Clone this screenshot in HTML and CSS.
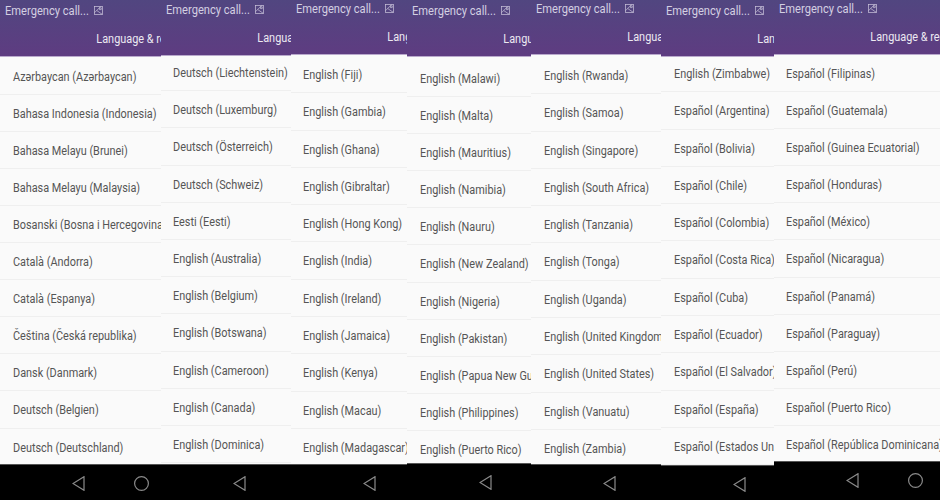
FILE: index.html
```html
<!DOCTYPE html>
<html lang="en">
<head>
    <meta charset="UTF-8">
    <title>Language &amp; region</title>
    <link rel="stylesheet" href="styles.css">
</head>
<body>
    <div class="strip">
        <section class="phone p1">
            <header class="top">
                <div class="status"><span>Emergency call...</span>
                    <svg class="pic" viewBox="0 0 10 10"><rect x=".5" y=".5" width="9" height="9"/><path d="M.5 7.5 L7.5 .5 M3 5 L9.5 9.5 M6 2 h2 v2 h-2z"/></svg>
                </div>
                <div class="title">Language &amp; region</div>
            </header>
            <div class="list"><ul>
                <li>Azərbaycan (Azərbaycan)</li>
                <li>Bahasa Indonesia (Indonesia)</li>
                <li>Bahasa Melayu (Brunei)</li>
                <li>Bahasa Melayu (Malaysia)</li>
                <li>Bosanski (Bosna i Hercegovina)</li>
                <li>Català (Andorra)</li>
                <li>Català (Espanya)</li>
                <li>Čeština (Česká republika)</li>
                <li>Dansk (Danmark)</li>
                <li>Deutsch (Belgien)</li>
                <li>Deutsch (Deutschland)</li>
            </ul></div>
            <nav class="keys">
                <svg class="back" viewBox="0 0 13 15"><path d="M12 .7 V14.3 L1 7.5z"/></svg>
                <svg class="home" viewBox="0 0 15 15"><circle cx="7.5" cy="7.5" r="6.9"/></svg>
            </nav>
        </section>

        <section class="phone p2">
            <header class="top">
                <div class="status"><span>Emergency call...</span>
                    <svg class="pic" viewBox="0 0 10 10"><rect x=".5" y=".5" width="9" height="9"/><path d="M.5 7.5 L7.5 .5 M3 5 L9.5 9.5 M6 2 h2 v2 h-2z"/></svg>
                </div>
                <div class="title">Language &amp; region</div>
            </header>
            <div class="list"><ul>
                <li>Deutsch (Liechtenstein)</li>
                <li>Deutsch (Luxemburg)</li>
                <li>Deutsch (Österreich)</li>
                <li>Deutsch (Schweiz)</li>
                <li>Eesti (Eesti)</li>
                <li>English (Australia)</li>
                <li>English (Belgium)</li>
                <li>English (Botswana)</li>
                <li>English (Cameroon)</li>
                <li>English (Canada)</li>
                <li>English (Dominica)</li>
            </ul></div>
            <nav class="keys">
                <svg class="back" viewBox="0 0 13 15"><path d="M12 .7 V14.3 L1 7.5z"/></svg>
                <svg class="home" viewBox="0 0 15 15"><circle cx="7.5" cy="7.5" r="6.9"/></svg>
            </nav>
        </section>

        <section class="phone p3">
            <header class="top">
                <div class="status"><span>Emergency call...</span>
                    <svg class="pic" viewBox="0 0 10 10"><rect x=".5" y=".5" width="9" height="9"/><path d="M.5 7.5 L7.5 .5 M3 5 L9.5 9.5 M6 2 h2 v2 h-2z"/></svg>
                </div>
                <div class="title">Language &amp; region</div>
            </header>
            <div class="list"><ul>
                <li>English (Fiji)</li>
                <li>English (Gambia)</li>
                <li>English (Ghana)</li>
                <li>English (Gibraltar)</li>
                <li>English (Hong Kong)</li>
                <li>English (India)</li>
                <li>English (Ireland)</li>
                <li>English (Jamaica)</li>
                <li>English (Kenya)</li>
                <li>English (Macau)</li>
                <li>English (Madagascar)</li>
            </ul></div>
            <nav class="keys">
                <svg class="back" viewBox="0 0 13 15"><path d="M12 .7 V14.3 L1 7.5z"/></svg>
                <svg class="home" viewBox="0 0 15 15"><circle cx="7.5" cy="7.5" r="6.9"/></svg>
            </nav>
        </section>

        <section class="phone p4">
            <header class="top">
                <div class="status"><span>Emergency call...</span>
                    <svg class="pic" viewBox="0 0 10 10"><rect x=".5" y=".5" width="9" height="9"/><path d="M.5 7.5 L7.5 .5 M3 5 L9.5 9.5 M6 2 h2 v2 h-2z"/></svg>
                </div>
                <div class="title">Language &amp; region</div>
            </header>
            <div class="list"><ul>
                <li>English (Malawi)</li>
                <li>English (Malta)</li>
                <li>English (Mauritius)</li>
                <li>English (Namibia)</li>
                <li>English (Nauru)</li>
                <li>English (New Zealand)</li>
                <li>English (Nigeria)</li>
                <li>English (Pakistan)</li>
                <li>English (Papua New Guinea)</li>
                <li>English (Philippines)</li>
                <li>English (Puerto Rico)</li>
            </ul></div>
            <nav class="keys">
                <svg class="back" viewBox="0 0 13 15"><path d="M12 .7 V14.3 L1 7.5z"/></svg>
                <svg class="home" viewBox="0 0 15 15"><circle cx="7.5" cy="7.5" r="6.9"/></svg>
            </nav>
        </section>

        <section class="phone p5">
            <header class="top">
                <div class="status"><span>Emergency call...</span>
                    <svg class="pic" viewBox="0 0 10 10"><rect x=".5" y=".5" width="9" height="9"/><path d="M.5 7.5 L7.5 .5 M3 5 L9.5 9.5 M6 2 h2 v2 h-2z"/></svg>
                </div>
                <div class="title">Language &amp; region</div>
            </header>
            <div class="list"><ul>
                <li>English (Rwanda)</li>
                <li>English (Samoa)</li>
                <li>English (Singapore)</li>
                <li>English (South Africa)</li>
                <li>English (Tanzania)</li>
                <li>English (Tonga)</li>
                <li>English (Uganda)</li>
                <li>English (United Kingdom)</li>
                <li>English (United States)</li>
                <li>English (Vanuatu)</li>
                <li>English (Zambia)</li>
            </ul></div>
            <nav class="keys">
                <svg class="back" viewBox="0 0 13 15"><path d="M12 .7 V14.3 L1 7.5z"/></svg>
                <svg class="home" viewBox="0 0 15 15"><circle cx="7.5" cy="7.5" r="6.9"/></svg>
            </nav>
        </section>

        <section class="phone p6">
            <header class="top">
                <div class="status"><span>Emergency call...</span>
                    <svg class="pic" viewBox="0 0 10 10"><rect x=".5" y=".5" width="9" height="9"/><path d="M.5 7.5 L7.5 .5 M3 5 L9.5 9.5 M6 2 h2 v2 h-2z"/></svg>
                </div>
                <div class="title">Language &amp; region</div>
            </header>
            <div class="list"><ul>
                <li>English (Zimbabwe)</li>
                <li>Español (Argentina)</li>
                <li>Español (Bolivia)</li>
                <li>Español (Chile)</li>
                <li>Español (Colombia)</li>
                <li>Español (Costa Rica)</li>
                <li>Español (Cuba)</li>
                <li>Español (Ecuador)</li>
                <li>Español (El Salvador)</li>
                <li>Español (España)</li>
                <li>Español (Estados Unidos)</li>
            </ul></div>
            <nav class="keys">
                <svg class="back" viewBox="0 0 13 15"><path d="M12 .7 V14.3 L1 7.5z"/></svg>
                <svg class="home" viewBox="0 0 15 15"><circle cx="7.5" cy="7.5" r="6.9"/></svg>
            </nav>
        </section>

        <section class="phone p7">
            <header class="top">
                <div class="status"><span>Emergency call...</span>
                    <svg class="pic" viewBox="0 0 10 10"><rect x=".5" y=".5" width="9" height="9"/><path d="M.5 7.5 L7.5 .5 M3 5 L9.5 9.5 M6 2 h2 v2 h-2z"/></svg>
                </div>
                <div class="title">Language &amp; region</div>
            </header>
            <div class="list"><ul>
                <li>Español (Filipinas)</li>
                <li>Español (Guatemala)</li>
                <li>Español (Guinea Ecuatorial)</li>
                <li>Español (Honduras)</li>
                <li>Español (México)</li>
                <li>Español (Nicaragua)</li>
                <li>Español (Panamá)</li>
                <li>Español (Paraguay)</li>
                <li>Español (Perú)</li>
                <li>Español (Puerto Rico)</li>
                <li>Español (República Dominicana)</li>
            </ul></div>
            <nav class="keys">
                <svg class="back" viewBox="0 0 13 15"><path d="M12 .7 V14.3 L1 7.5z"/></svg>
                <svg class="home" viewBox="0 0 15 15"><circle cx="7.5" cy="7.5" r="6.9"/></svg>
            </nav>
        </section>
    </div>
</body>
</html>
```
FILE: styles.css
```css
html, body {
    margin: 0;
    padding: 0;
}
body {
    width: 940px;
    height: 500px;
    overflow: hidden;
    background: #000;
    font-family: Roboto, "Liberation Sans", sans-serif;
}
.strip {
    display: flex;
    height: 500px;
}
.phone {
    --squeeze: .87;
    display: flex;
    flex-direction: column;
    flex: none;
    width: var(--w);
    height: 500px;
    overflow: hidden;
    background: #fafafa;
}
.p1 { --w: 161px; --top: 57px; --keys: 36px; --shift: .6px; --row: 37.1px; --text: 13px; }
.p2 { --w: 130px; --top: 56px; --keys: 36px; --shift: -2px; --row: 37.2px; --text: 12px; }
.p3 { --w: 116px; --top: 55px; --keys: 36px; --shift: 1px;  --row: 37.3px; --text: 12px; }
.p4 { --w: 124px; --top: 57px; --keys: 37px; --shift: 3px;  --row: 37.1px; --text: 13px; }
.p5 { --w: 130px; --top: 55px; --keys: 36px; --shift: 2px;  --row: 37.3px; --text: 13px; }
.p6 { --w: 113px; --top: 57px; --keys: 35px; --shift: -2px; --row: 37.3px; --text: 13px; }
.p7 { --w: 166px; --top: 55px; --keys: 39px; --shift: 0px;  --row: 37.1px; --text: 12px; }

/* the source shots are squashed sideways, so the text is scaled to match */
.top {
    flex: none;
    width: 360px;
    height: var(--top);
    box-sizing: border-box;
    padding: calc(var(--top) - 55px) 0 0 5px;
    background: linear-gradient(180deg, #514680, #5e3c81);
    border-bottom: 1px solid #b9a9cc;
    color: #d3d0e2;
}
.status {
    display: flex;
    align-items: center;
    height: 16px;
    font-size: 12.5px;
}
.status span {
    flex: none;
    width: 89px;
    margin-left: -.5px;
    white-space: nowrap;
    transform: scaleX(.89);
    transform-origin: left;
}
.pic {
    width: 9px;
    height: 9px;
    fill: none;
    stroke: #c9c3da;
    stroke-width: .8;
}
.title {
    width: 400px;
    padding: 12px 0 0 105px;
    font-size: 12.5px;
    line-height: 18px;
    color: #ece9f2;
    white-space: nowrap;
    transform: scaleX(var(--squeeze));
    transform-origin: left;
}
.list {
    flex: 1;
    min-height: 0;
    overflow: hidden;
}
.list ul {
    list-style: none;
    margin: var(--shift) 0 0;
    padding: 0;
    width: 500px;
    transform: scaleX(var(--squeeze));
    transform-origin: left;
}
.list li {
    box-sizing: border-box;
    height: var(--row);
    line-height: 37px;
    padding-left: calc(var(--text) / var(--squeeze));
    font-size: 12.5px;
    color: #555;
    white-space: nowrap;
    border-bottom: 1px solid #efefef;
}
.keys {
    flex: none;
    display: flex;
    align-items: flex-start;
    width: 360px;
    height: var(--keys);
    padding: 11px 0 0 72px;
    background: #000;
    border-top: 1px solid #555;
    box-sizing: border-box;
}
.back {
    width: 13px;
    height: 15px;
    fill: none;
    stroke: #8a8a8a;
    stroke-width: 1.2;
}
.home {
    width: 15px;
    height: 15px;
    margin-left: 49px;
    fill: none;
    stroke: #8a8a8a;
    stroke-width: 1.2;
}
```
